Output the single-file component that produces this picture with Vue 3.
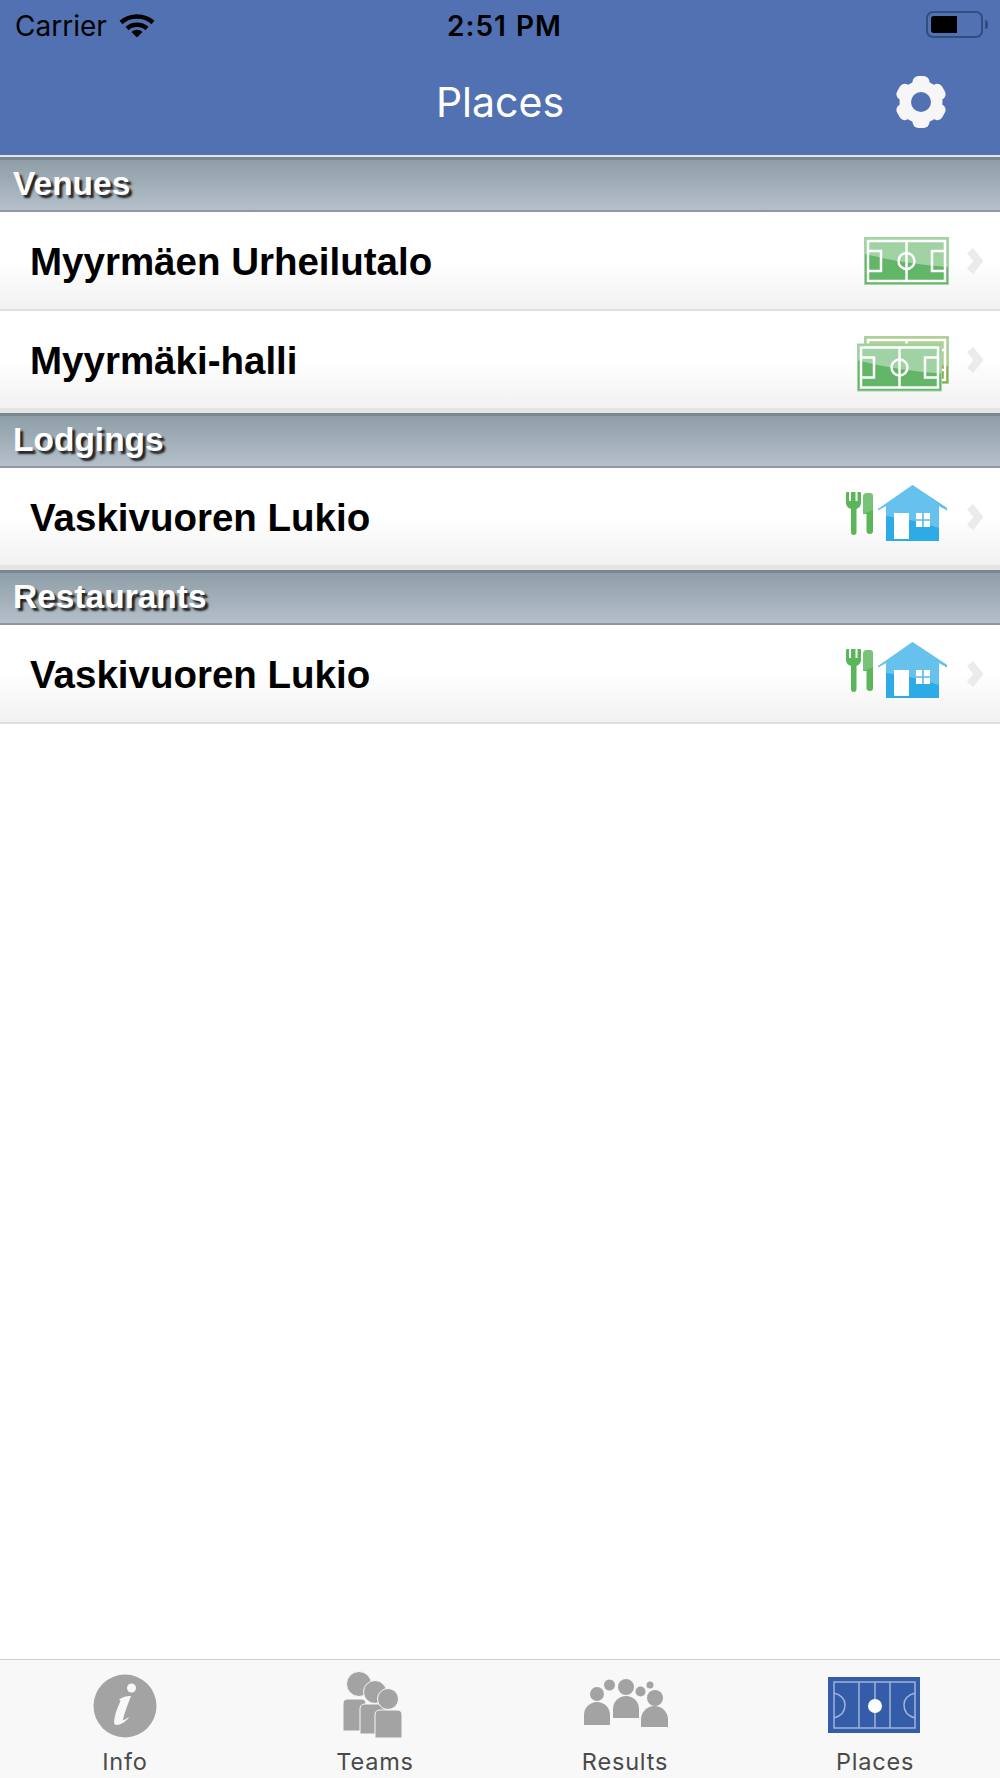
<template>
  <div class="screen">
    <!-- shared field graphic -->
    <svg class="defs" width="0" height="0">
      <symbol id="field" viewBox="0 0 85 48">
        <rect x="0.5" y="0.5" width="84" height="47" fill="currentColor" stroke="#a5d6a8" />
        <path d="M1 1H84V30Q40 27 1 17Z" fill="#fff" opacity="0.4" />
        <g fill="none" stroke="#fff" stroke-width="2.5">
          <rect x="4" y="4" width="77" height="40" />
          <path d="M42.5 4V44" />
          <circle cx="42.5" cy="24" r="8" />
          <path d="M4 14H17V34H4M81 14H68V34H81" />
        </g>
      </symbol>
    </svg>

    <header class="topbar">
      <div class="status">
        <div class="status-left">
          <span class="carrier">Carrier</span>
          <svg class="wifi" viewBox="0 0 36 24">
            <path d="M2 9.5C11 1.5 25 1.5 34 9.5" fill="none" stroke="#000" stroke-width="4.4" />
            <path d="M8 15.5C13.5 10.5 22.5 10.500 28 15.5" fill="none" stroke="#000" stroke-width="4.4" />
            <path d="M12.5 19C15.5 16 20.5 16 23.5 19L18 24.5Z" fill="#000" />
          </svg>
        </div>
        <span class="time">2:51 PM</span>
        <div class="status-right">
          <div class="battery"><div class="battery-level"></div></div>
          <div class="battery-nub"></div>
        </div>
      </div>
      <div class="nav">
        <span class="nav-title">Places</span>
        <svg class="gear" viewBox="0 0 52 52">
          <g fill="#f6f6f6">
            <rect v-for="a in gearAngles" :key="a" x="17.500" y="0" width="17" height="52" rx="6" :transform="`rotate(${a} 26 26)`" />
            <circle cx="26" cy="26" r="21.500" />
          </g>
          <circle cx="26" cy="26" r="10" fill="#5271b2" />
        </svg>
      </div>
    </header>

    <main class="content">
      <section v-for="section in sections" :key="section.title">
        <h2 class="section-title">{{ section.title }}</h2>
        <div
          v-for="row in section.rows"
          :key="row.name"
          class="row"
          :class="{ 'row-end': section.band && row === section.rows[section.rows.length - 1] }"
        >
          <span class="row-name">{{ row.name }}</span>

          <svg v-if="row.icon === 'field'" class="ic-field" viewBox="0 0 85 48">
            <use href="#field" width="85" height="48" class="turf" />
          </svg>

          <svg v-else-if="row.icon === 'fields'" class="ic-fields" viewBox="0 0 92 64">
            <use href="#field" x="7" y="8" width="85" height="48" class="turf-back" />
            <use href="#field" x="0" y="15" width="85" height="49" class="turf" />
          </svg>

          <svg v-else class="ic-lodging" viewBox="0 0 103 63">
            <g transform="translate(0 7)">
              <!-- fork -->
              <path d="M0 1Q0 0 1 0H3V9H5V0H9.500V9H11.500V0H14Q15 0 15 1V10C15 14 13 16 10.500 17V40Q10.500 43 7.500 43Q5 43 5 40V17C2 16 0 14 0 10Z" fill="#5bb65a" />
              <!-- knife -->
              <path d="M21 1H24Q27 1 27 4V39Q27 42 24 42Q20.500 42 20.500 39V22H17V5Q17 1 21 1Z" fill="#5bb65a" />
              <path d="M21 1H24Q27 1 27 4V18L17 22V5Q17 1 21 1Z" fill="#fff" opacity="0.18" />
            </g>
            <!-- house -->
            <path d="M66.500 0L101 23V25.500L93 21V56H40V21L32 25.500V24Z" fill="#2cabe6" />
            <path d="M66.500 0L101 23.500V25.500L93 21V43Q70 35 40 31V21L32 25.500V24Z" fill="#fff" opacity="0.28" />
            <rect x="48" y="28" width="15" height="26" fill="#fff" />
            <rect x="70" y="28" width="14" height="14" fill="#fff" />
            <path d="M77 28V42M70 35H84" stroke="#58bbea" stroke-width="1.600" />
          </svg>

          <svg class="chevron" viewBox="0 0 16 26">
            <path d="M3 2.500L11.500 13L3 23.500" fill="none" stroke="#ebebeb" stroke-width="8" />
          </svg>
        </div>
      </section>
    </main>

    <nav class="tabbar">
      <div v-for="tab in tabs" :key="tab.label" class="tab">
        <svg class="tab-icon" viewBox="0 0 100 70">
          <g v-if="tab.label === 'Info'">
            <circle cx="50" cy="36" r="31.500" fill="#a3a3a3" />
            <circle cx="56.500" cy="18" r="4.500" fill="#f8f8f8" />
            <path d="M44 29.500C48 26.500 54 25.500 56 26C53 34 49 44 48 50C49 50.500 52 48.500 54 47C53 50 46 55 41.500 55C38 55 39 50 40.500 44C41.500 39.500 44 35 45.500 31C45.500 30 44.500 30.500 44 29.500Z" fill="#f8f8f8" />
          </g>

          <g v-else-if="tab.label === 'Teams'" fill="#a3a3a3" stroke="#f8f8f8" stroke-width="1">
            <circle cx="34" cy="14" r="12.500" />
            <path d="M18 61V34Q18 29 23 29H36Q41 29 41 34V61Z" />
            <circle cx="50" cy="22" r="11.500" />
            <path d="M35 64V39Q35 34 40 34H56Q61 34 61 39V64Z" />
            <circle cx="63" cy="29" r="10.500" />
            <path d="M50 68V45Q50 40 55 40H72Q77 40 77 45V68Z" />
          </g>

          <g v-else-if="tab.label === 'Results'" fill="#a3a3a3">
            <circle cx="22" cy="24" r="7" />
            <path d="M9 55V45A13 13 0 0 1 35 45V55Z" />
            <circle cx="51" cy="17" r="8" />
            <path d="M38 48V39A13 13 0 0 1 64 39V48Z" />
            <circle cx="80" cy="28" r="8" />
            <path d="M66 57V49.500A13.500 13.500 0 0 1 93 49.500V57Z" />
            <circle cx="34.500" cy="15" r="5.500" />
            <circle cx="65.500" cy="21.500" r="5" />
            <circle cx="75" cy="15" r="3.500" />
          </g>

          <g v-else>
            <rect x="3" y="7" width="92" height="56" fill="#355ca8" />
            <g fill="none" stroke="#9fb4d8" stroke-width="1.500">
              <rect x="9" y="12" width="81" height="46" />
              <path d="M34 12V58M50 12V58M65 12V58" />
              <path d="M9 23Q20 26 20 35Q20 45 9 48M90 23Q79 26 79 35Q79 45 90 48" />
            </g>
            <circle cx="50" cy="36" r="7" fill="#fff" />
          </g>
        </svg>
        <span class="tab-label">{{ tab.label }}</span>
      </div>
    </nav>
  </div>
</template>

<script setup>
const gearAngles = [0, 60, 120]

const sections = [
  {
    title: 'Venues',
    band: true,
    rows: [
      { name: 'Myyrmäen Urheilutalo', icon: 'field' },
      { name: 'Myyrmäki-halli', icon: 'fields' }
    ]
  },
  {
    title: 'Lodgings',
    band: true,
    rows: [{ name: 'Vaskivuoren Lukio', icon: 'lodging' }]
  },
  {
    title: 'Restaurants',
    band: false,
    rows: [{ name: 'Vaskivuoren Lukio', icon: 'lodging' }]
  }
]

const tabs = [
  { label: 'Info' },
  { label: 'Teams' },
  { label: 'Results' },
  { label: 'Places' }
]
</script>

<style>
html,
body {
  margin: 0;
  background: #fff;
}
</style>

<style scoped>
.screen {
  display: flex;
  flex-direction: column;
  height: 1778px;
  font-family: "Liberation Sans", Arial, sans-serif;
  overflow: hidden;
}

.defs {
  position: absolute;
}

.topbar {
  height: 155px;
  flex: none;
  background: #5271b2;
  border-bottom: 2px solid #e2e4e6;
  font-family: Inter, "Liberation Sans", sans-serif;
}

.status {
  display: grid;
  grid-template-columns: 1fr auto 1fr;
  align-items: center;
  height: 50px;
  padding: 1px 12px 0 15px;
  box-sizing: border-box;
}

.status-left {
  display: flex;
  align-items: center;
  gap: 12px;
}

.carrier {
  font-size: 28px;
  color: #000;
}

.wifi {
  width: 36px;
  height: 24px;
  margin-top: -2px;
}

.time {
  margin-left: 6px;
  font-size: 28px;
  font-weight: 600;
  letter-spacing: 1px;
  word-spacing: 1px;
  color: #000;
}

.status-right {
  display: flex;
  align-items: center;
  justify-content: flex-end;
  gap: 2px;
  margin-top: -2px;
}

.battery {
  box-sizing: border-box;
  width: 57px;
  height: 27px;
  padding: 3px;
  border: 2px solid #2f4d80;
  border-radius: 7px;
}

.battery-level {
  width: 26px;
  height: 100%;
  background: #000;
  border-radius: 3px 0 0 3px;
}

.battery-nub {
  width: 3px;
  height: 9px;
  background: #2f4d80;
  border-radius: 0 3px 3px 0;
}

.nav {
  position: relative;
  display: flex;
  align-items: center;
  justify-content: center;
  height: 105px;
  padding-bottom: 2px;
  box-sizing: border-box;
}

.nav-title {
  font-size: 41px;
  color: #fff;
}

.gear {
  position: absolute;
  right: 53px;
  top: 26px;
  width: 52px;
  height: 52px;
}

.content {
  flex: 1;
}

.section-title {
  box-sizing: border-box;
  height: 55px;
  margin: 0;
  padding-left: 13px;
  border-top: 3px solid #78868f;
  border-bottom: 2px solid #8f979e;
  background: linear-gradient(#8f9ea8, #b4bfc9);
  color: #fff;
  font-size: 33.5px;
  font-weight: 700;
  line-height: 48px;
  text-shadow: 3px 3px 2px #222;
}

.row {
  box-sizing: border-box;
  display: flex;
  align-items: center;
  height: 99px;
  padding: 0 17px 0 30px;
  border-bottom: 2px solid #dedede;
  background: linear-gradient(#fff 50%, #f1f1f1);
}

.row-end {
  height: 102px;
  border-bottom: 5px solid #e4e4e4;
}

.row-name {
  flex: 1;
  padding-top: 3px;
  color: #000;
  font-size: 38.5px;
  font-weight: 700;
}

.turf {
  color: #63b568;
}

.turf-back {
  color: #86ab49;
}

.ic-field {
  width: 85px;
  height: 48px;
}

.ic-fields {
  width: 92px;
  height: 64px;
}

.ic-lodging {
  width: 103px;
  height: 63px;
}

.chevron {
  width: 16px;
  height: 26px;
  margin-left: 18px;
  margin-top: 1px;
}

.tabbar {
  display: flex;
  flex: none;
  height: 119px;
  box-sizing: border-box;
  padding-top: 10px;
  border-top: 1px solid #cfcfcf;
  background: #f8f8f8;
}

.tab {
  flex: 1;
  display: flex;
  flex-direction: column;
  align-items: center;
}

.tab-icon {
  width: 100px;
  height: 70px;
}

.tab-label {
  margin-top: 7px;
  color: #4a4a4a;
  font-family: Inter, "Liberation Sans", sans-serif;
  font-size: 23.5px;
  line-height: 30px;
  letter-spacing: 0.8px;
}
</style>
